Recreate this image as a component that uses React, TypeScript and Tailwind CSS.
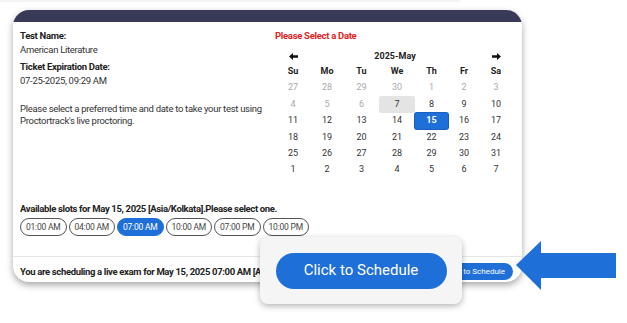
import clsx from "clsx";

const weekDays = ["Su", "Mo", "Tu", "We", "Th", "Fr", "Sa"];

// [day, muted]
const weeks: [number, boolean][][] = [
  [[27, true], [28, true], [29, true], [30, true], [1, true], [2, true], [3, true]],
  [[4, true], [5, true], [6, true], [7, false], [8, false], [9, false], [10, false]],
  [[11, false], [12, false], [13, false], [14, false], [15, false], [16, false], [17, false]],
  [[18, false], [19, false], [20, false], [21, false], [22, false], [23, false], [24, false]],
  [[25, false], [26, false], [27, false], [28, false], [29, false], [30, false], [31, false]],
  [[1, false], [2, false], [3, false], [4, false], [5, false], [6, false], [7, false]],
];

const slots = ["01:00 AM", "04:00 AM", "07:00 AM", "10:00 AM", "07:00 PM", "10:00 PM"];

const cols = "grid grid-cols-[34px_34px_35px_36px_33px_32px_32px]";

const Arrow = ({ flip }: { flip?: boolean }) => (
  <svg
    width="9"
    height="7"
    viewBox="0 0 9 7"
    className={ clsx("mx-auto", flip && "rotate-180") }
  >
    <polygon points="0,3.5 4,0 4,2.3 9,2.3 9,4.7 4,4.7 4,7" fill="#111" />
  </svg>
);

const Calendar = () => (
  <div className="mt-[6px] w-[236px] text-[9px]">
    <div className={ clsx(cols, "h-[15px] items-center") }>
      <Arrow />
      <span className="col-span-5 text-center font-bold text-[#222]">2025-May</span>
      <Arrow flip />
    </div>
    <div className={ clsx(cols, "h-4 items-center") }>
      { weekDays.map((d) => (
        <span key={ d } className="text-center font-bold text-[#222]">
          { d }
        </span>
      )) }
    </div>
    { weeks.map((week, wi) => (
      <div key={ wi } className={ clsx(cols, "h-[16.4px]") }>
        { week.map(([day, muted], di) => {
          const isToday = wi === 1 && di === 3;
          const isSelected = wi === 2 && di === 4;
          return (
            <span
              key={ di }
              className={ clsx(
                "flex items-center justify-center rounded-[2px]",
                muted ? "text-[#aaa]" : "text-[#333]",
                isToday && "bg-[#e4e4e4]",
                isSelected && "bg-[#1f6fd9] font-bold text-white ring-1 ring-[#1a5fc0]",
              ) }
            >
              { day }
            </span>
          );
        }) }
      </div>
    )) }
  </div>
);

const App = () => {
  return (
    <div className="relative w-[627px] h-[323px] overflow-hidden bg-white font-['Roboto',sans-serif]">
      <div className="h-[2px] w-[460px] bg-gray-100" />
      <div className="ml-[13px] mt-[8px] w-[509px] overflow-hidden rounded-[16px] bg-white shadow-[0_3px_7px_rgba(0,0,0,0.35)]">
        <div className="h-[12px] bg-[#393a57]" />

        <div className="flex px-[7px]">
          <div className="w-[255px] pt-[7px] text-[9.5px] tracking-[-0.3px] text-[#333]">
            <p className="font-bold leading-[14px] text-[#222]">Test Name:</p>
            <p className="leading-[14px]">American Literature</p>
            <p className="mt-[3px] font-bold leading-[14px] text-[#222]">Ticket Expiration Date:</p>
            <p className="leading-[14px]">07-25-2025, 09:29 AM</p>
            <p className="mt-[15px] leading-[12px]">
              Please select a preferred time and date to take your test using Proctortrack's live
              proctoring.
            </p>
          </div>
          <div className="pt-[7px]">
            <p className="text-[9.5px] font-bold leading-[14px] tracking-[-0.3px] text-[#e0231e]">
              Please Select a Date
            </p>
            <div className="ml-[1px]">
              <Calendar />
            </div>
          </div>
        </div>

        <div className="mt-[24px] px-[7px]">
          <p className="text-[9.5px] font-bold leading-[14px] tracking-[-0.35px] text-[#222]">
            Available slots for May 15, 2025 [Asia/Kolkata].Please select one.
          </p>
          <div className="mt-[2px] flex gap-[2px]">
            { slots.map((s) => (
              <span
                key={ s }
                className={ clsx(
                  "flex h-[18px] w-[46.5px] items-center justify-center rounded-full border text-[8.5px] tracking-[-0.2px]",
                  s === "07:00 AM"
                    ? "border-[#1f6fd9] bg-[#1f6fd9] text-white"
                    : "border-[#555] text-[#444]",
                ) }
              >
                { s }
              </span>
            )) }
          </div>
        </div>

        <div className="mt-[20px] flex items-center justify-between border-t border-[#e6e6e6] pl-[7px] pr-[9px] pt-[6px] pb-[2px]">
          <p className="text-[9.5px] font-bold leading-[14px] tracking-[-0.35px] text-[#222]">
            You are scheduling a live exam for May 15, 2025 07:00 AM [Asia/Kolkata]
          </p>
          <button className="flex h-[17px] items-center rounded-full bg-[#1f6fd9] px-[8px] text-[8px] text-white">
            Click to Schedule
          </button>
        </div>
      </div>

      <div className="absolute left-[260px] top-[237px] flex h-[67px] w-[202px] items-center justify-center rounded-[8px] bg-[#f5f5f5] shadow-[0_2px_6px_rgba(0,0,0,0.3)]">
        <button className="flex h-[36px] w-[171px] items-center justify-center rounded-full bg-[#1f6fd9] text-[15px] text-white">
          Click to Schedule
        </button>
      </div>

      <svg className="absolute left-[516px] top-[241px]" width="101" height="50" viewBox="0 0 101 50">
        <polygon points="0,24 25,0 25,12 100,12 100,37 25,37 25,49" fill="#1f6fd9" />
      </svg>
    </div>
  );
};

export default App;
